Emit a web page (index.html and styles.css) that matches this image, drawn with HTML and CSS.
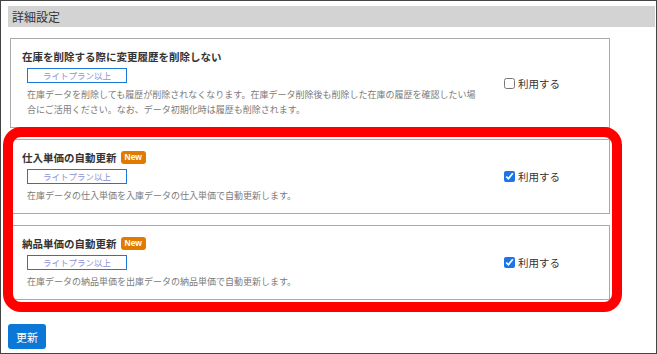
FILE: index.html
```html
<!DOCTYPE html>
<html lang="ja">
<head>
    <meta charset="UTF-8">
    <meta name="viewport" content="width=device-width, initial-scale=1.0">
    <title>詳細設定</title>
    <link rel="stylesheet" href="styles.css">
</head>
<body>

    <div class="page">
        <div class="section-title">詳細設定</div>

        <div class="setting-card">
            <div class="setting-info">
                <div class="setting-name">在庫を削除する際に変更履歴を削除しない</div>
                <div class="plan-badge">ライトプラン以上</div>
                <p class="setting-desc">在庫データを削除しても履歴が削除されなくなります。在庫データ削除後も削除した在庫の履歴を確認したい場合にご活用ください。なお、データ初期化時は履歴も削除されます。</p>
            </div>
            <label class="setting-check">
                <input type="checkbox">利用する
            </label>
        </div>

        <div class="setting-card">
            <div class="setting-info">
                <div class="setting-name">仕入単価の自動更新<span class="new-badge">New</span></div>
                <div class="plan-badge">ライトプラン以上</div>
                <p class="setting-desc">在庫データの仕入単価を入庫データの仕入単価で自動更新します。</p>
            </div>
            <label class="setting-check">
                <input type="checkbox" checked>利用する
            </label>
        </div>

        <div class="setting-card">
            <div class="setting-info">
                <div class="setting-name">納品単価の自動更新<span class="new-badge">New</span></div>
                <div class="plan-badge">ライトプラン以上</div>
                <p class="setting-desc">在庫データの納品単価を出庫データの納品単価で自動更新します。</p>
            </div>
            <label class="setting-check">
                <input type="checkbox" checked>利用する
            </label>
        </div>

        <button class="update-btn">更新</button>

        <!-- annotation drawn over the two new settings -->
        <div class="highlight-frame"></div>
    </div>

</body>
</html>
```

FILE: styles.css
```css
body {
    margin: 0;
    font-family: "Noto Sans CJK JP", "Noto Sans", sans-serif;
    color: #333;
    background: #fff;
}

.page {
    position: relative;
    width: 657px;
    height: 354px;
    box-sizing: border-box;
    border: 1px solid #444;
    padding: 5px 1px 0 7px;
}

.section-title {
    height: 21px;
    line-height: 21px;
    background-color: #d3d3d3;
    padding-left: 4px;
    font-size: 12px;
    color: #333;
}

.setting-card {
    width: 600px;
    box-sizing: border-box;
    margin: 11px 0 0 2px;
    border: 1px solid #aaa;
    padding: 10px 0 10px 11px;
    display: grid;
    grid-template-columns: 1fr 105px;
    column-gap: 18px;
    align-items: center;
}

.setting-name {
    font-size: 10.5px;
    line-height: 15px;
    font-weight: bold;
    color: #333;
    display: flex;
    align-items: center;
}

.new-badge {
    display: inline-block;
    margin-left: 4px;
    height: 13px;
    line-height: 13px;
    padding: 0 4px;
    border-radius: 3px;
    background-color: #e27a00;
    color: #fff;
    font-size: 8.5px;
    font-weight: bold;
    font-family: "Liberation Sans", Arial, sans-serif;
}

.plan-badge {
    width: 100px;
    height: 15px;
    box-sizing: border-box;
    margin: 4px 0 0 5px;
    border: 1.5px solid #1b78d8;
    text-align: center;
    font-size: 8.5px;
    line-height: 12px;
    color: #8c93d6;
}

.setting-desc {
    margin: 4px 5px 0 5px;
    font-size: 9px;
    line-height: 15px;
    color: #7a7a7a;
}

.setting-check {
    display: flex;
    align-items: center;
    font-size: 10.5px;
    color: #333;
}

.setting-check input {
    width: 11px;
    height: 11px;
    margin: 0 3px 0 0;
    accent-color: #1b74e8;
}

.update-btn {
    display: block;
    margin: 24px 0 0 0;
    height: 25px;
    padding: 0 8px;
    border: none;
    border-radius: 3px;
    background-color: #0b78d7;
    color: #fff;
    font-family: inherit;
    font-size: 11px;
}

.highlight-frame {
    position: absolute;
    left: 2px;
    top: 126px;
    width: 619px;
    height: 185px;
    box-sizing: border-box;
    border: 10px solid #ff0000;
    border-radius: 18px;
    pointer-events: none;
}
```
